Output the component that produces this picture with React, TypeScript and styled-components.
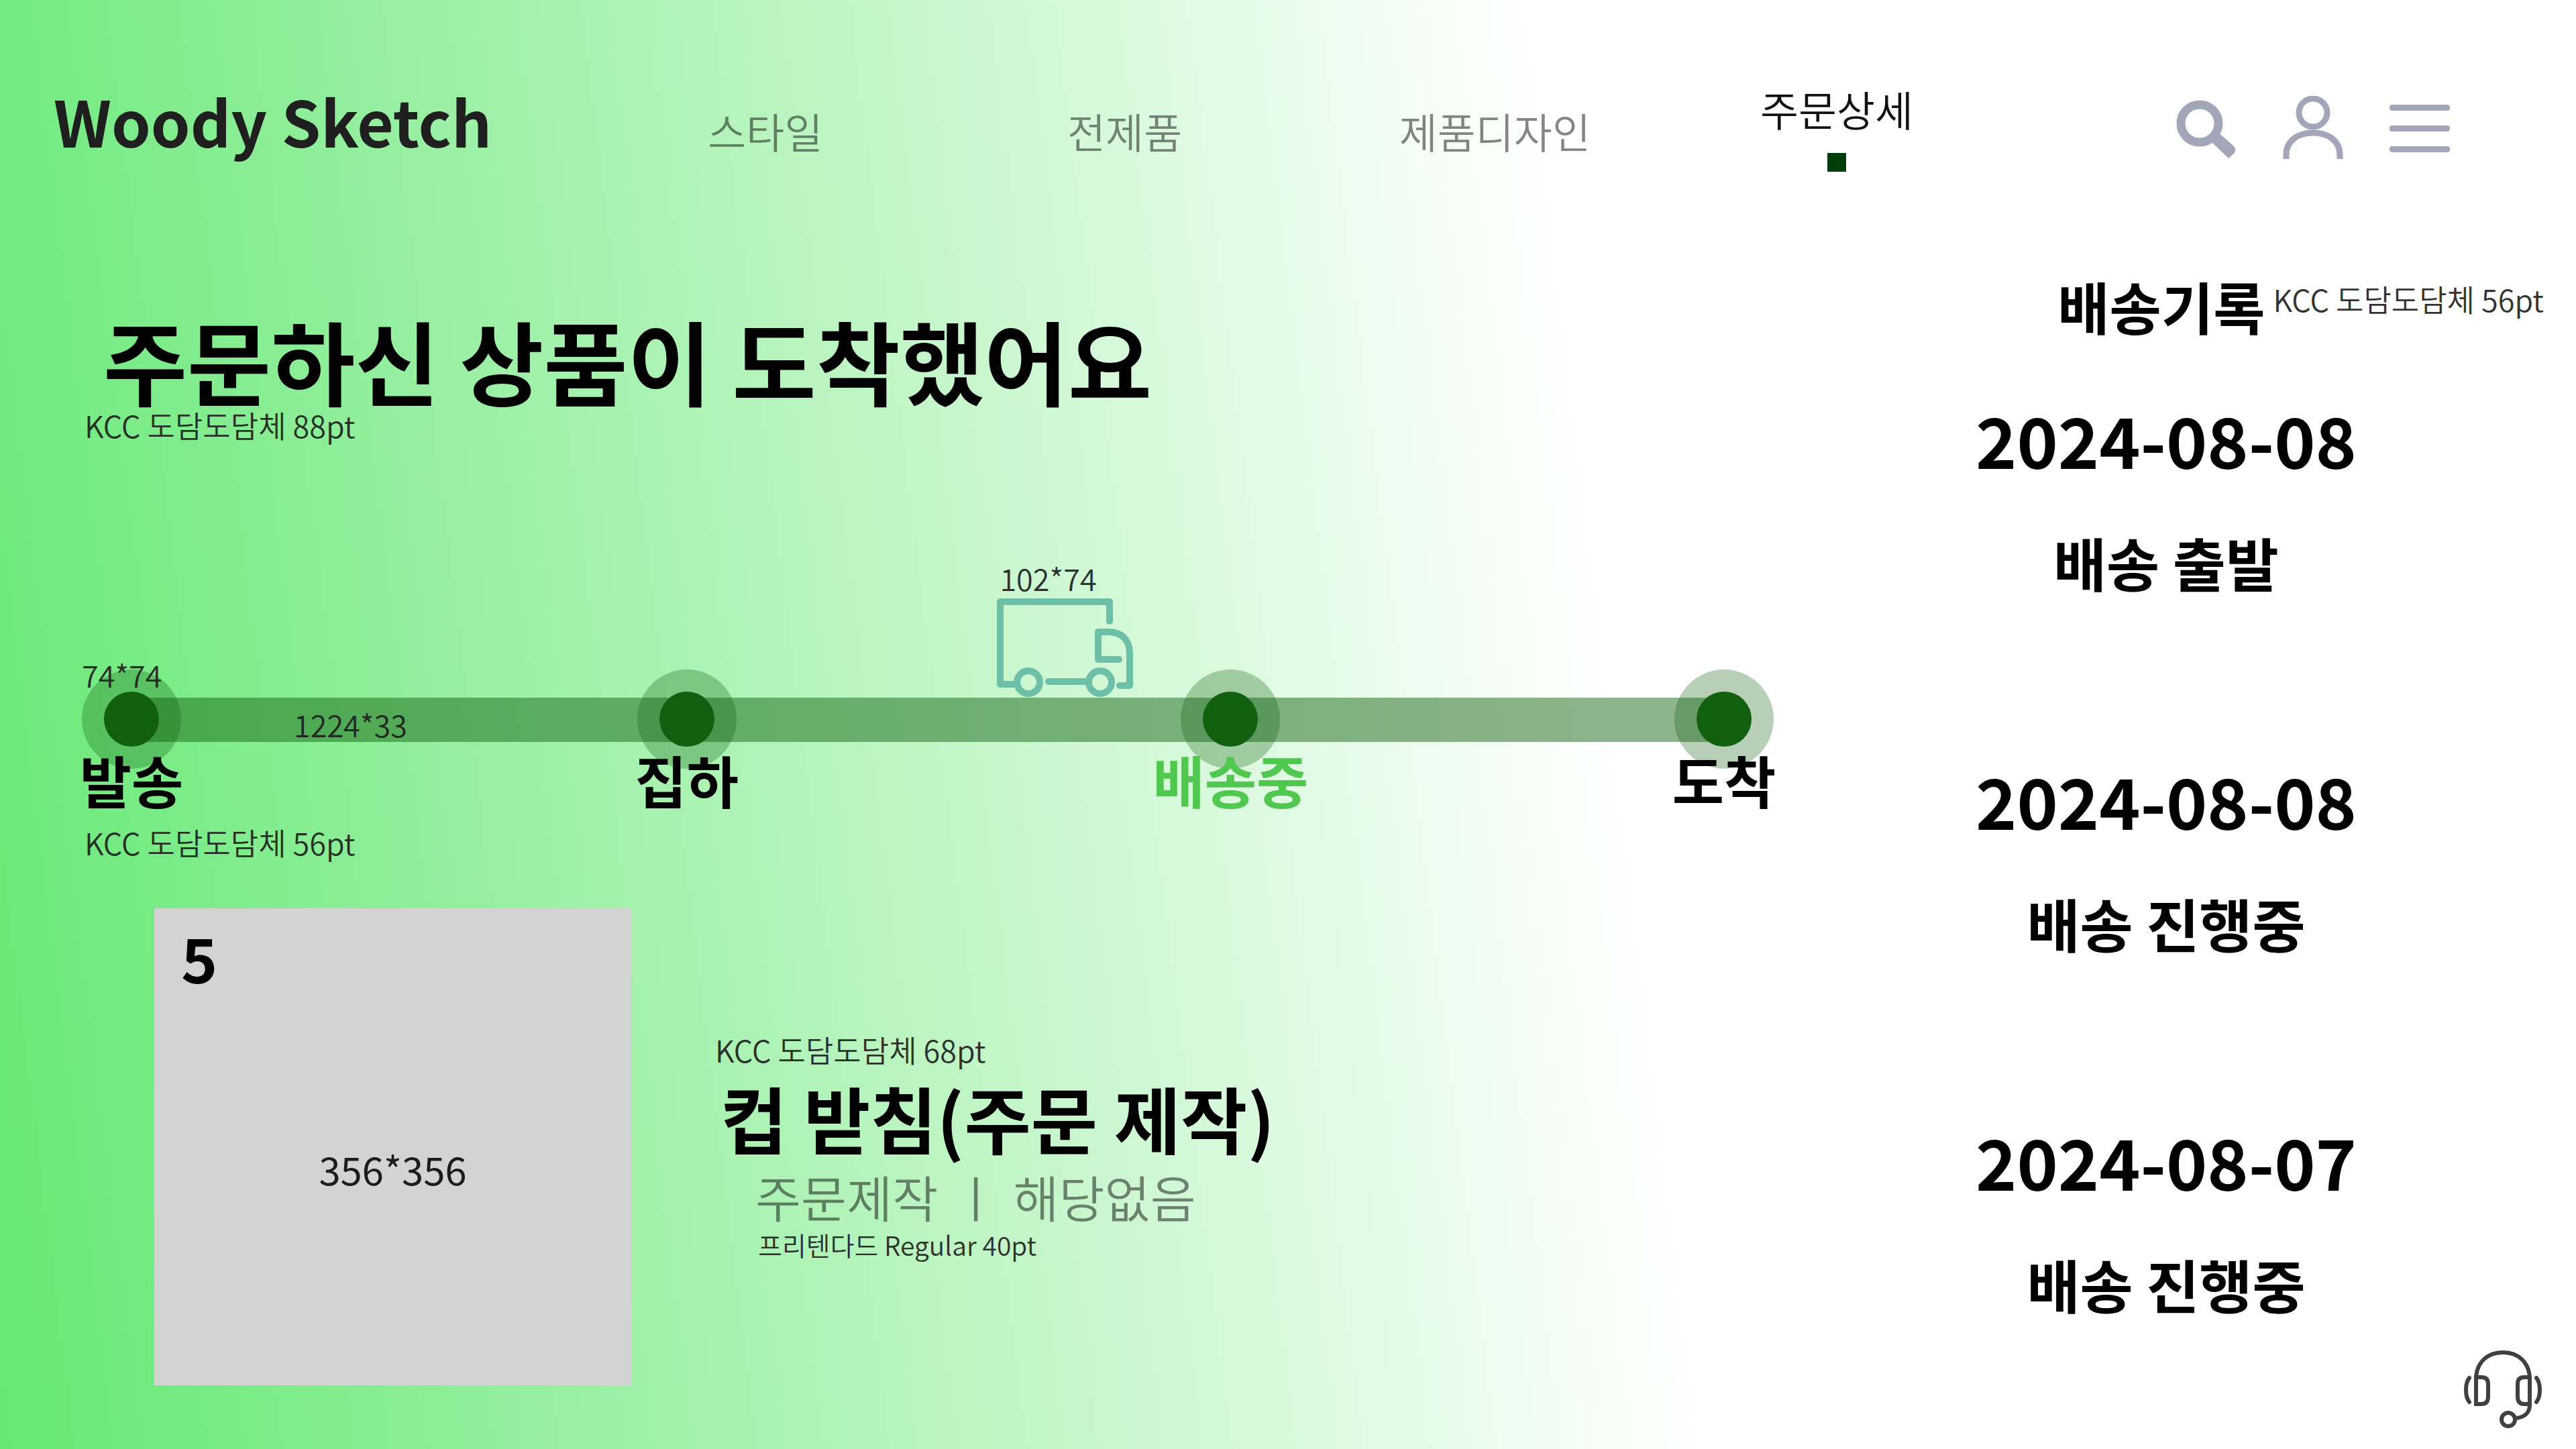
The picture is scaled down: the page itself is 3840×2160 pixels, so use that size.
import React from "react";
import styled, { createGlobalStyle } from "styled-components";

const ink = "#000000";
const forest = "#11600f";
const muted = "rgba(0, 0, 0, 0.48)";
const iconTint = "#a3a6b8";

const GlobalStyle = createGlobalStyle`
  *, *::before, *::after { box-sizing: border-box; }
  body {
    margin: 0;
    font-family: "Noto Sans CJK KR", "Noto Sans", sans-serif;
    color: ${ink};
  }
  h1, h2, h3, p, ol, ul { margin: 0; padding: 0; font-weight: inherit; }
  ol, ul { list-style: none; }
  a { color: inherit; text-decoration: none; }
  button { border: 0; padding: 0; background: none; cursor: pointer; }
  svg { display: block; }
`;

const Page = styled.div`
  position: relative;
  min-height: 100vh;
  overflow: hidden;
  background: linear-gradient(83deg, #64e873 0%, #ffffff 62%);
`;

const Header = styled.header`
  display: grid;
  grid-template-columns: 795px minmax(0, 1fr) auto;
  align-items: center;
  padding: 126px 188px 0 80px;
`;

const Logo = styled.a`
  padding-bottom: 24px;
  font-size: 94px;
  line-height: 106px;
  font-weight: 700;
  color: #1f1f1f;
  white-space: nowrap;
`;

const Nav = styled.nav`
  display: grid;
  grid-template-columns: 532fr 540fr 564fr 456fr;
  align-items: center;
`;

const NavLink = styled.a<{ $active?: boolean }>`
  display: flex;
  flex-direction: column;
  align-items: center;
  gap: 30px;
  padding-top: ${(p) => (p.$active ? 0 : 8)}px;
  font-size: 62px;
  line-height: 72px;
  font-weight: 350;
  white-space: nowrap;
  color: ${(p) => (p.$active ? "#111111" : muted)};

  &::after {
    content: "";
    display: ${(p) => (p.$active ? "block" : "none")};
    width: 28px;
    height: 28px;
    background: #003d0c;
  }
`;

const Tools = styled.div`
  display: flex;
  gap: 69px;
  margin-left: 278px;
`;

const ToolButton = styled.button`
  width: 90px;
  height: 96px;
  color: ${iconTint};
`;

const Main = styled.main`
  display: grid;
  grid-template-columns: minmax(0, 1fr) 1000px;
  padding-bottom: 92px;
`;

const Order = styled.section`
  padding-left: 122px;
`;

const Headline = styled.h1`
  margin-top: 212px;
  padding-left: 32px;
  font-size: 136px;
  line-height: 136px;
  font-weight: 700;
  white-space: nowrap;
`;

const Note = styled.p<{ $small?: boolean; $indent?: number }>`
  padding-left: ${(p) => p.$indent ?? 0}px;
  font-size: ${(p) => (p.$small ? 39 : 45)}px;
  line-height: ${(p) => (p.$small ? 48 : 60)}px;
  font-weight: 350;
  color: #1c1c1c;
  opacity: 0.9;
  white-space: nowrap;
`;

const Tracker = styled.div`
  position: relative;
  margin: 334px 196px 16px 0;

  &::before {
    content: "";
    position: absolute;
    top: 42px;
    left: 74px;
    right: 74px;
    height: 66px;
    background: ${forest};
    opacity: 0.48;
  }
`;

const Steps = styled.ol`
  position: relative;
  display: grid;
  grid-template-columns: 828fr 811fr 736fr 148px;
`;

const Step = styled.li<{ $current?: boolean }>`
  display: flex;
  flex-direction: column;
  align-items: center;
  width: 148px;
  font-size: 84px;
  line-height: 96px;
  font-weight: 700;
  white-space: nowrap;
  color: ${(p) => (p.$current ? "#50c850" : ink)};
`;

const Marker = styled.span`
  display: grid;
  place-items: center;
  width: 148px;
  height: 148px;
  margin-bottom: -32px;
  border-radius: 50%;
  background: rgba(17, 96, 15, 0.3);

  &::after {
    content: "";
    width: 82px;
    height: 82px;
    border-radius: 50%;
    background: ${forest};
  }
`;

const StepLabel = styled.span`
  position: relative;
`;

/* Notes and the truck float over the track. */
const Pin = styled.div<{ $left: string; $top: number }>`
  position: absolute;
  left: ${(p) => p.$left};
  top: ${(p) => p.$top}px;
`;

const Product = styled.article`
  display: flex;
  align-items: center;
  gap: 125px;
  margin-top: 68px;
  padding-left: 108px;
`;

const Thumb = styled.div`
  display: flex;
  flex-direction: column;
  width: 711px;
  height: 711px;
  padding: 24px 40px;
  background: #d3d3d3;
`;

const Count = styled.strong`
  font-size: 92px;
  line-height: 96px;
  font-weight: 700;
`;

const ThumbSize = styled.span`
  margin-top: 228px;
  text-align: center;
  font-size: 58px;
  line-height: 80px;
  font-weight: 400;
  color: #1c1c1c;
`;

const ProductText = styled.div`
  padding-bottom: 6px;
`;

const ProductName = styled.h2`
  padding-left: 8px;
  font-size: 108px;
  line-height: 140px;
  font-weight: 700;
  white-space: nowrap;
`;

const ProductMeta = styled.p`
  display: flex;
  gap: 22px;
  padding-left: 60px;
  font-size: 74px;
  line-height: 96px;
  font-weight: 350;
  color: ${muted};
  white-space: nowrap;
`;

const History = styled.aside`
  padding-top: 144px;
`;

const HistoryHead = styled.div`
  display: flex;
  align-items: flex-start;
  justify-content: flex-end;
  gap: 12px;
  padding-right: 48px;
`;

const HistoryTitle = styled.h2`
  font-size: 84px;
  line-height: 112px;
  font-weight: 700;
  white-space: nowrap;
`;

const HistoryNote = styled.div`
  padding-top: 16px;
`;

const Records = styled.ol`
  display: grid;
  gap: 242px;
  margin-top: 86px;
  padding-right: 222px;
`;

const Record = styled.li`
  display: grid;
  gap: 72px;
  justify-items: center;
  line-height: 112px;
  font-weight: 700;
  white-space: nowrap;
`;

const RecordDate = styled.time`
  font-size: 104px;
`;

const RecordStatus = styled.span`
  font-size: 86px;
`;

const SupportButton = styled.button`
  position: absolute;
  right: 50px;
  bottom: 30px;
  color: #404040;
`;

const SearchIcon = () => (
  <svg width="90" height="96" viewBox="0 0 90 96" fill="none" aria-hidden="true">
    <circle cx="35" cy="41" r="28" stroke="currentColor" strokeWidth="13" />
    <path d="M50 66 L62 54 L85 74 Q91 80 86 86 L78 93 Z" fill="currentColor" />
  </svg>
);

const UserIcon = () => (
  <svg width="90" height="96" viewBox="0 0 90 96" fill="none" stroke="currentColor" strokeWidth="9" aria-hidden="true">
    <circle cx="45" cy="25" r="21" />
    <path d="M5 94 V88 C5 67 22 55 45 55 C68 55 85 67 85 88 V94" />
  </svg>
);

const MenuIcon = () => (
  <svg width="90" height="96" viewBox="0 0 90 96" fill="currentColor" aria-hidden="true">
    <rect x="0" y="13" width="90" height="9" rx="4" />
    <rect x="0" y="44" width="90" height="9" rx="4" />
    <rect x="0" y="75" width="90" height="9" rx="4" />
  </svg>
);

const TruckIcon = () => (
  <svg
    width="204"
    height="148"
    viewBox="0 0 204 148"
    fill="none"
    stroke="#6dbfa8"
    strokeWidth="10"
    strokeLinecap="round"
    strokeLinejoin="round"
    aria-hidden="true"
  >
    <path d="M27 128 H5 V5 H168 V34" />
    <path d="M182 91 H151 V50 H166 C186 50 198 62 198 82 V130 H183" />
    <path d="M77 124 H133" />
    <circle cx="47" cy="125" r="17" />
    <circle cx="154" cy="125" r="17" />
  </svg>
);

const HeadsetIcon = () => (
  <svg width="117" height="118" viewBox="0 0 117 118" fill="none" stroke="currentColor" strokeWidth="6" strokeLinecap="round" aria-hidden="true">
    <path d="M18 80 V44 C18 20 34 4 58 4 C82 4 98 20 98 44 V82 C98 94 90 101 77 102" />
    <path d="M18 41 H26 Q36 41 36 51 V70 Q36 81 26 81 H18 Z" />
    <path d="M98 41 H90 Q80 41 80 51 V70 Q80 81 90 81 H98" />
    <path d="M8 42 Q3 48 3 60 Q3 72 8 78" />
    <path d="M108 42 Q113 48 113 60 Q113 72 108 78" />
    <circle cx="66" cy="104" r="10" />
  </svg>
);

const links = [
  { label: "스타일", active: false },
  { label: "전제품", active: false },
  { label: "제품디자인", active: false },
  { label: "주문상세", active: true },
];

const steps = [
  { label: "발송", current: false },
  { label: "집하", current: false },
  { label: "배송중", current: true },
  { label: "도착", current: false },
];

const records = [
  { date: "2024-08-08", status: "배송 출발" },
  { date: "2024-08-08", status: "배송 진행중" },
  { date: "2024-08-07", status: "배송 진행중" },
];

export default function App() {
  return (
    <Page>
      <GlobalStyle />
      <Header>
        <Logo href="#">Woody Sketch</Logo>
        <Nav>
          {links.map((l) => (
            <NavLink key={l.label} href="#" $active={l.active} aria-current={l.active ? "page" : undefined}>
              {l.label}
            </NavLink>
          ))}
        </Nav>
        <Tools>
          <ToolButton type="button" aria-label="검색"><SearchIcon /></ToolButton>
          <ToolButton type="button" aria-label="내 정보"><UserIcon /></ToolButton>
          <ToolButton type="button" aria-label="메뉴"><MenuIcon /></ToolButton>
        </Tools>
      </Header>

      <Main>
        <Order>
          <Headline>주문하신 상품이 도착했어요</Headline>
          <Note $indent={4}>KCC 도담도담체 88pt</Note>

          <Tracker>
            <Steps>
              {steps.map((s) => (
                <Step key={s.label} $current={s.current} aria-current={s.current ? "step" : undefined}>
                  <Marker />
                  <StepLabel>{s.label}</StepLabel>
                </Step>
              ))}
            </Steps>
            <Pin $left="0px" $top={-22}><Note>74*74</Note></Pin>
            <Pin $left="316px" $top={52}><Note>1224*33</Note></Pin>
            <Pin $left="54.1%" $top={-166}>
              <Note $indent={4}>102*74</Note>
              <TruckIcon />
            </Pin>
          </Tracker>
          <Note $indent={4}>KCC 도담도담체 56pt</Note>

          <Product>
            <Thumb>
              <Count>5</Count>
              <ThumbSize>356*356</ThumbSize>
            </Thumb>
            <ProductText>
              <Note>KCC 도담도담체 68pt</Note>
              <ProductName>컵 받침(주문 제작)</ProductName>
              <ProductMeta>
                <span>주문제작</span>
                <span>ㅣ</span>
                <span>해당없음</span>
              </ProductMeta>
              <Note $small $indent={64}>프리텐다드 Regular 40pt</Note>
            </ProductText>
          </Product>
        </Order>

        <History>
          <HistoryHead>
            <HistoryTitle>배송기록</HistoryTitle>
            <HistoryNote>
              <Note>KCC 도담도담체 56pt</Note>
            </HistoryNote>
          </HistoryHead>
          <Records>
            {records.map((r, i) => (
              <Record key={i}>
                <RecordDate dateTime={r.date}>{r.date}</RecordDate>
                <RecordStatus>{r.status}</RecordStatus>
              </Record>
            ))}
          </Records>
        </History>
      </Main>

      <SupportButton type="button" aria-label="고객센터"><HeadsetIcon /></SupportButton>
    </Page>
  );
}
